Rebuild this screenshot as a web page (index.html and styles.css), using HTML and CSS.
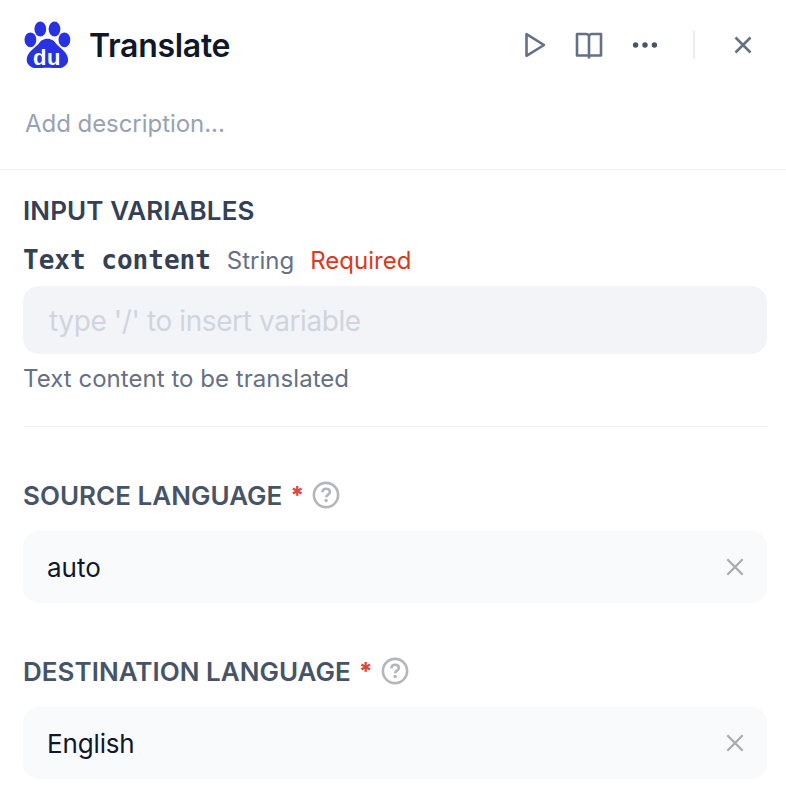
FILE: index.html
```html
<!DOCTYPE html>
<html lang="en">
<head>
<meta charset="utf-8">
<title>Translate</title>
<link rel="stylesheet" href="styles.css">
</head>
<body>
<main class="panel">
  <header class="head">
    <div class="title-row">
      <svg class="logo" viewBox="0 0 48 48">
        <ellipse cx="16.300" cy="8" rx="5.900" ry="7.400"/>
        <ellipse cx="30.500" cy="8" rx="5.900" ry="7.400"/>
        <ellipse cx="6.400" cy="18.800" rx="5.900" ry="7.400"/>
        <ellipse cx="40.400" cy="18.800" rx="5.900" ry="7.400"/>
        <path d="M23.400 17.800c4.400 0 7 2.400 9 5.200 2.600 3.400 11.700 8 11.700 15.700 0 4.500-3.900 8.300-9.200 8.300-3.900 0-7.200-.3-11.500-.3s-7.600.3-11.500.3c-5.300 0-9.200-3.800-9.200-8.300 0-7.700 9.100-12.300 11.700-15.700 2-2.800 4.600-5.200 9-5.200z"/>
        <text class="logo-text" x="9" y="43.500" textLength="27.500">du</text>
      </svg>
      <h1 class="title">Translate</h1>
      <nav class="actions">
        <svg class="icon play" viewBox="0 0 32 32"><path d="M6.500 5.200v21.600L24 16z"/></svg>
        <svg class="icon" viewBox="0 0 32 32"><path d="M16 6.500v23M16 7c-.5-1.300-1.500-2-3-2H4v21.500h24V5h-9c-1.500 0-2.500.7-3 2"/></svg>
        <svg class="icon dots" viewBox="0 0 32 32"><circle cx="6.600" cy="16" r="2.700"/><circle cx="16" cy="16" r="2.700"/><circle cx="25.400" cy="16" r="2.700"/></svg>
        <span class="separator"></span>
        <svg class="icon" viewBox="0 0 32 32"><path d="M8.500 8.500l15 15M23.500 8.500l-15 15"/></svg>
      </nav>
    </div>
    <div class="description">Add description...</div>
  </header>
  <section class="inputs">
    <h2 class="heading">INPUT VARIABLES</h2>
    <div class="variable">
      <span class="name">Text content</span>
      <span class="type">String</span>
      <span class="required">Required</span>
    </div>
    <div class="editor">type '/' to insert variable</div>
    <p class="hint">Text content to be translated</p>
  </section>
  <section class="field">
    <div class="label"><span>SOURCE LANGUAGE</span><span class="star">*</span>
      <svg class="help" viewBox="0 0 28 28"><circle cx="14" cy="14" r="12.100"/><path d="M10.300 11.300c.2-2.200 1.700-3.500 3.800-3.500 2.200 0 3.800 1.300 3.800 3.200 0 2.600-3.800 2.700-3.800 5.300"/><circle class="point" cx="14.100" cy="19.500" r="1.700"/></svg>
    </div>
    <div class="select"><span>auto</span><svg class="clear" viewBox="0 0 20 20"><path d="M2.300 2.300l15.400 15.400M17.700 2.300L2.300 17.700"/></svg></div>
  </section>
  <section class="field">
    <div class="label"><span>DESTINATION LANGUAGE</span><span class="star">*</span>
      <svg class="help" viewBox="0 0 28 28"><circle cx="14" cy="14" r="12.100"/><path d="M10.300 11.300c.2-2.200 1.700-3.500 3.800-3.500 2.200 0 3.800 1.300 3.800 3.200 0 2.600-3.800 2.700-3.800 5.300"/><circle class="point" cx="14.100" cy="19.500" r="1.700"/></svg>
    </div>
    <div class="select english"><span>English</span><svg class="clear" viewBox="0 0 20 20"><path d="M2.300 2.300l15.400 15.400M17.700 2.300L2.300 17.700"/></svg></div>
  </section>
</main>
</body>
</html>
```
FILE: styles.css
```css
* { box-sizing: border-box; margin: 0; padding: 0; }
body { background: #fff; font-family: Inter, "Liberation Sans", sans-serif; color: #101828; }
.panel { width: 786px; height: 808px; }
.head { height: 170px; border-bottom: 1px solid #eceef2; padding: 21px 24px 0; }
.title-row { display: flex; align-items: center; height: 48px; }
.logo { width: 48px; height: 48px; flex: none; fill: #2932e1; }
.logo-text { font: bold 22px "Liberation Sans", sans-serif; fill: #fff; }
.title { margin-left: 17px; padding-top: 1px; font-size: 32px; font-weight: 600; line-height: 47px; letter-spacing: -0.3px; white-space: nowrap; }
.actions { display: flex; align-items: center; margin-left: auto; margin-right: 3px; }
.icon { width: 32px; height: 32px; margin-right: 24px; fill: none; stroke: #667085; stroke-width: 2.6; stroke-linejoin: round; }
.play { margin-right: 21px; }
.icon:last-child { margin-right: 0; }
.dots { fill: #475467; stroke: none; }
.separator { width: 2px; height: 28px; margin: 0 32px 0 8px; background: #eaecf0; }
.description { margin: 39px 0 0 1px; font-size: 24px; line-height: 32px; color: #98a2b3; letter-spacing: -0.05px; }
.inputs { height: 257px; margin: 0 18px 0 23px; padding-top: 25px; border-bottom: 1px solid #f2f4f7; }
.heading { font-size: 26px; font-weight: 600; line-height: 32px; letter-spacing: 0.1px; color: #344054; }
.variable { display: flex; align-items: baseline; height: 36px; margin-top: 15px; line-height: 36px; font-size: 24px; }
.name { font: bold 26px/36px "DejaVu Sans Mono", monospace; color: #344054; }
.type { margin-left: 16px; color: #667085; }
.required { margin-left: 16px; color: #d93a20; }
.editor { height: 68px; margin-top: 8px; margin-right: 1px; padding: 1px 26px 0; border-radius: 16px; background: #f2f4f7; font-size: 28px; line-height: 68px; letter-spacing: -0.4px; color: #d0d5dd; }
.hint { margin-top: 9px; font-size: 24px; line-height: 32px; letter-spacing: 0.04px; color: #667085; }
.field { margin: 0 19px 0 23px; padding-top: 50px; }
.label { display: flex; align-items: center; height: 36px; font-size: 26px; font-weight: 600; letter-spacing: 0.02px; color: #475467; }
.star { margin-left: 8px; font-size: 24px; font-weight: 800; color: #e0463c; }
.help { width: 28px; height: 28px; margin-left: 8px; fill: none; stroke: #b5b6bc; stroke-width: 2.6; }
.help .point { fill: #b5b6bc; stroke: none; }
.select { display: flex; align-items: center; justify-content: space-between; height: 72px; margin-top: 18px; padding: 0 22px 0 24px; border-radius: 16px; background: #f9fafb; font-size: 26px; }
.english { letter-spacing: -0.15px; }
.clear { width: 20px; height: 20px; flex: none; fill: none; stroke: #a9abb0; stroke-width: 2.3; }
```
